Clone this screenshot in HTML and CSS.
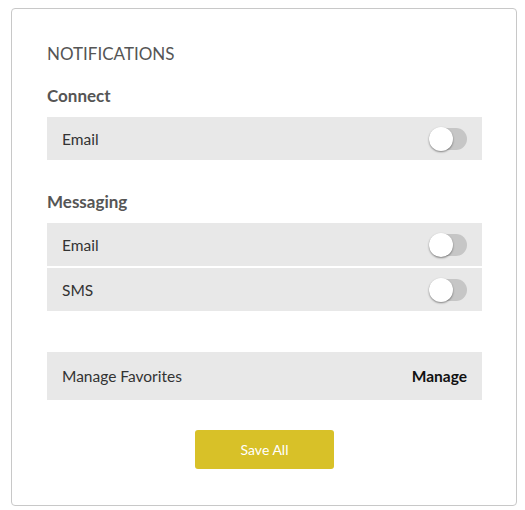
FILE: index.html
```html
<!DOCTYPE html>
<html lang="en">
<head>
    <meta charset="UTF-8">
    <meta name="viewport" content="width=device-width, initial-scale=1.0">
    <title>Notifications</title>
    <link rel="stylesheet" href="styles.css">
</head>
<body>
    <div class="card">
        <h1 class="title">NOTIFICATIONS</h1>

        <div class="group">
            <h2 class="group-title">Connect</h2>
            <div class="row">
                <span>Email</span>
                <span class="toggle"></span>
            </div>
        </div>

        <div class="group">
            <h2 class="group-title">Messaging</h2>
            <div class="row">
                <span>Email</span>
                <span class="toggle"></span>
            </div>
            <div class="row">
                <span>SMS</span>
                <span class="toggle"></span>
            </div>
        </div>

        <div class="row row-tall">
            <span>Manage Favorites</span>
            <a class="manage" href="#">Manage</a>
        </div>

        <div class="actions">
            <button class="save">Save All</button>
        </div>
    </div>
</body>
</html>
```

FILE: styles.css
```css
body {
    font-family: Lato, "Open Sans", sans-serif;
    margin: 0;
    padding: 8px 0 0 11px;
    background: #fff;
    color: #444;
}
.card {
    display: flex;
    flex-direction: column;
    width: 435px;
    padding: 30px 34px 36px 35px;
    border: 1px solid #c8c8c8;
    border-radius: 4px;
}
.title {
    font-size: 17px;
    font-weight: normal;
    color: #555;
    margin: 0 0 17px;
    line-height: 30px;
}
.group {
    margin-bottom: 32px;
}
.group-title {
    font-size: 17px;
    font-weight: bold;
    color: #555;
    margin: 0 0 11px;
    line-height: 20px;
}
.row {
    display: flex;
    align-items: center;
    justify-content: space-between;
    height: 43px;
    padding: 0 15px;
    background: #e8e8e8;
    font-size: 15.5px;
    color: #333;
}
.row + .row {
    margin-top: 2px;
}
.row-tall {
    height: 48px;
    margin-top: 9px;
}
.toggle {
    position: relative;
    width: 38px;
    height: 22px;
    border-radius: 11px;
    background: #c6c6c6;
}
.toggle::after {
    content: "";
    position: absolute;
    left: 0;
    top: -1px;
    width: 24px;
    height: 24px;
    border-radius: 50%;
    background: #fff;
    box-shadow: 0 1px 2px rgba(0, 0, 0, 0.45);
}
.manage {
    font-weight: bold;
    color: #111;
    text-decoration: none;
}
.actions {
    text-align: center;
    margin-top: 30px;
}
.save {
    width: 139px;
    height: 39px;
    border: none;
    border-radius: 3px;
    background: #d8c128;
    color: #fff;
    font-family: inherit;
    font-size: 14px;
    cursor: pointer;
}
```
